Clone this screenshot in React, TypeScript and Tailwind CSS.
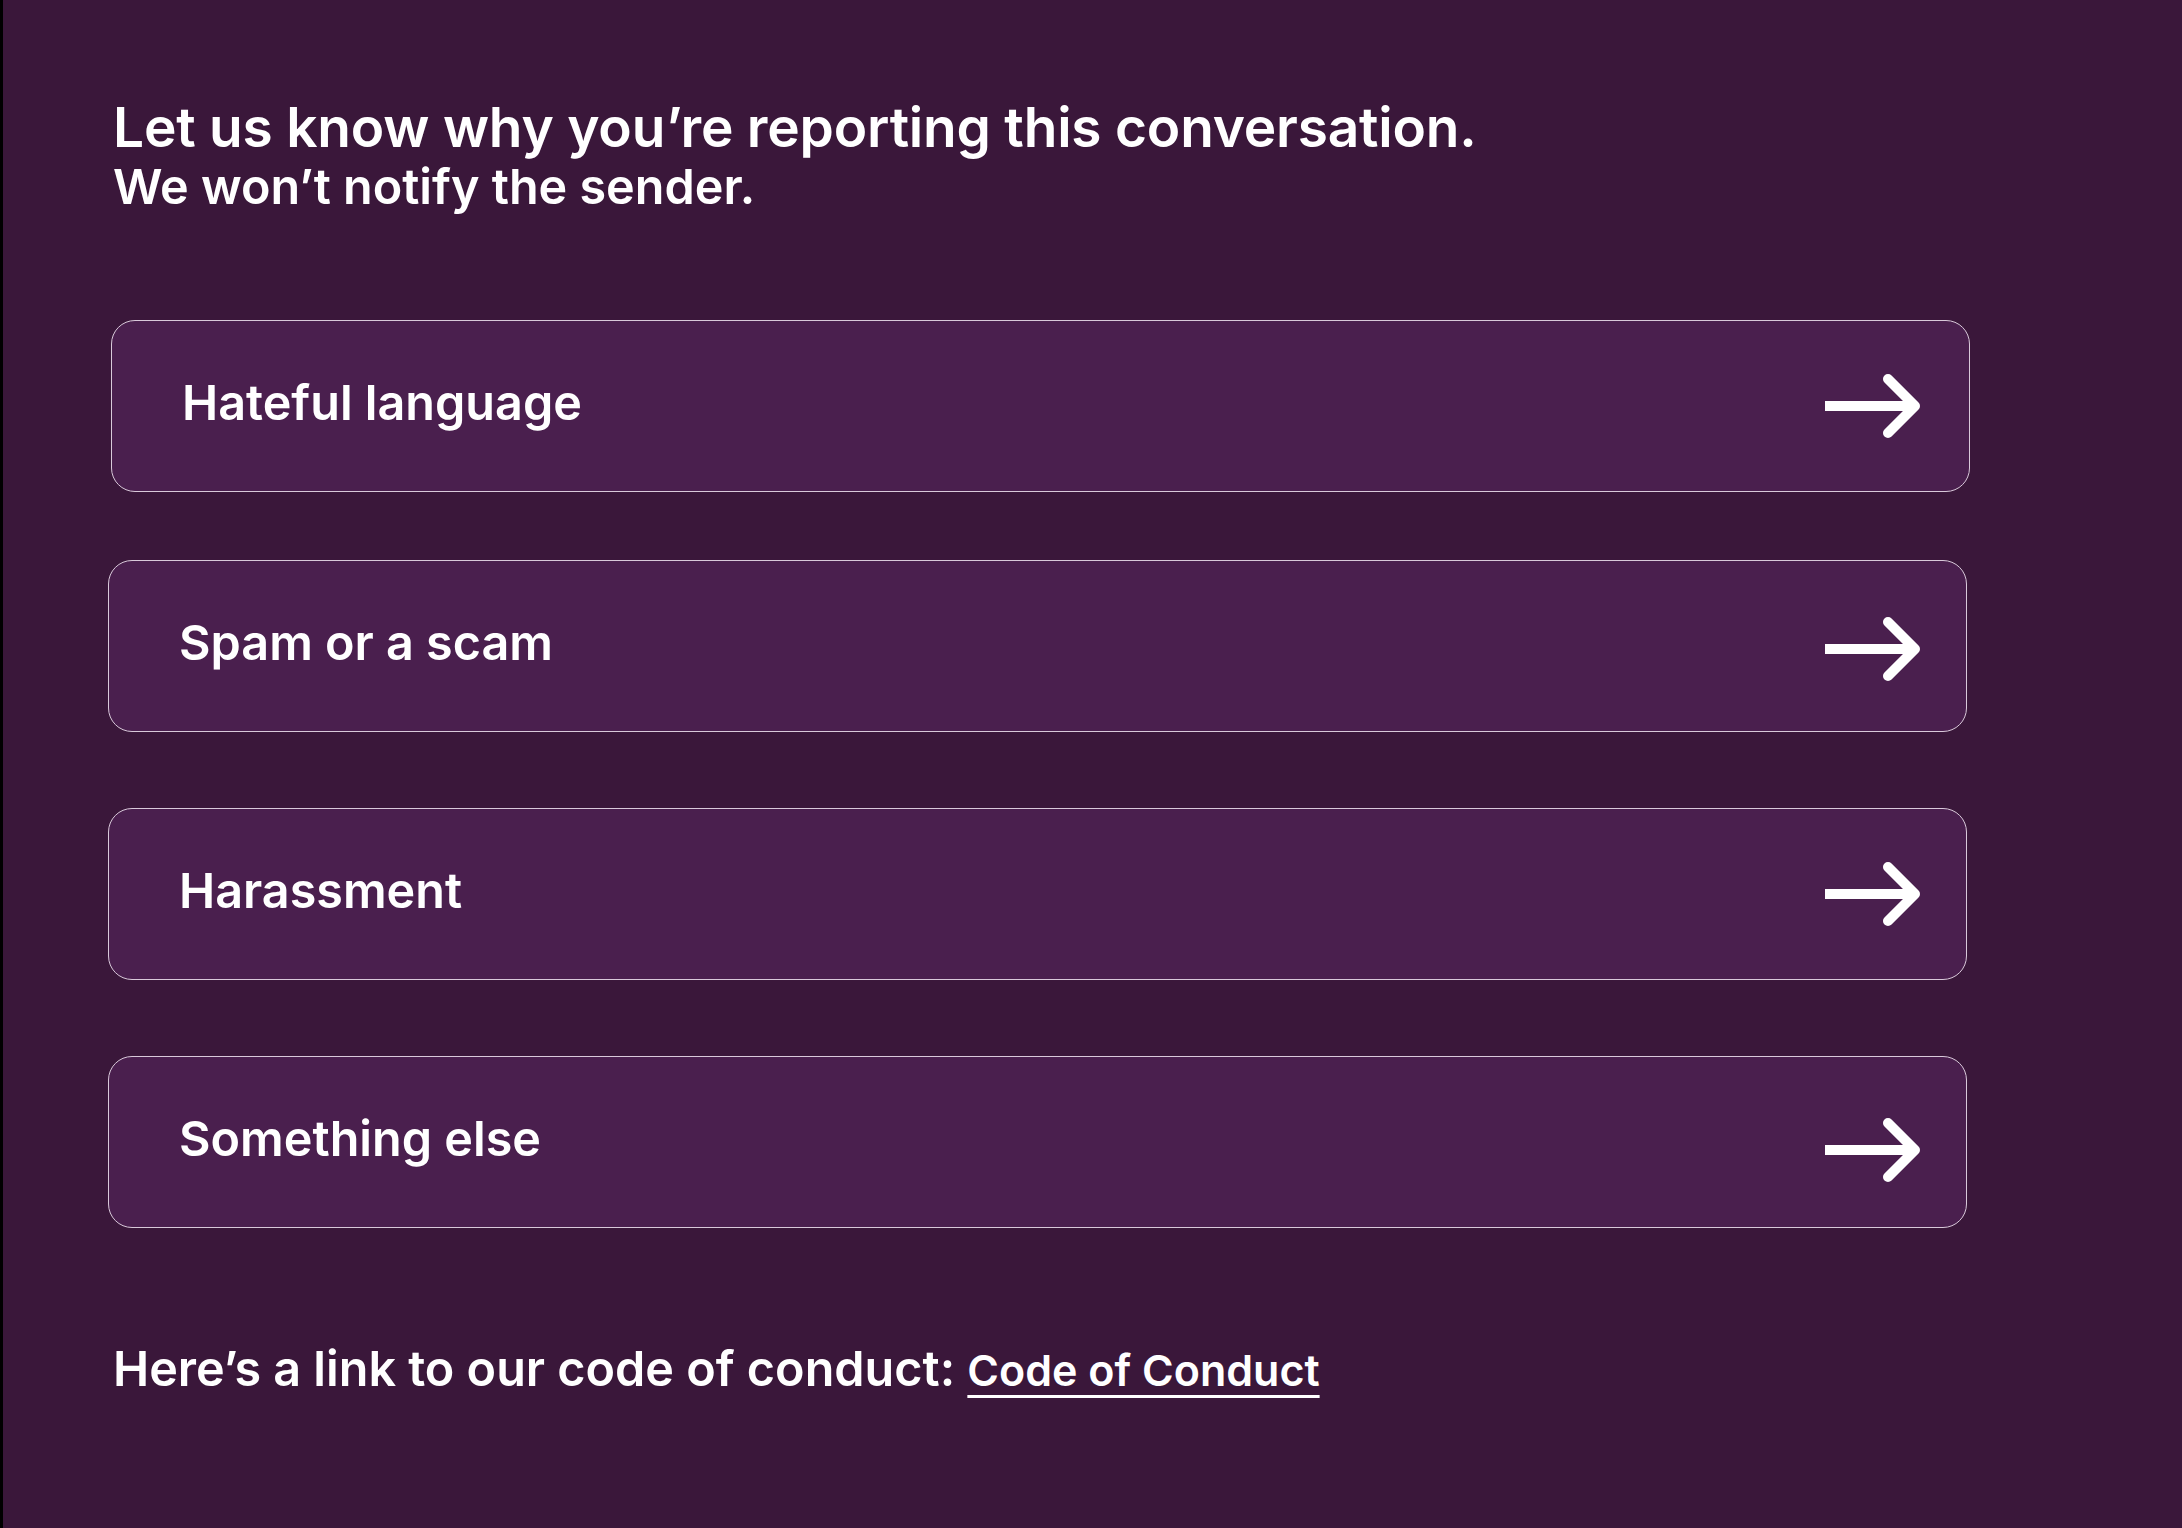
import React from "react";

const options = [
  { label: "Hateful language", cls: "mt-[108px] ml-[108px] w-[1859px] pr-[48px]", arrow: "" },
  { label: "Spam or a scam", cls: "mt-[68px] ml-[105px] w-[1859px] pr-[45px]", arrow: "translate-y-[3px]" },
  { label: "Harassment", cls: "mt-[76px] ml-[105px] w-[1859px] pr-[45px]", arrow: "" },
  { label: "Something else", cls: "mt-[76px] ml-[105px] w-[1859px] pr-[45px]", arrow: "translate-y-[8px]" },
];

function Arrow({ className }: { className?: string }) {
  return (
    <svg width="96" height="64" viewBox="0 0 96 64" fill="none" className={`shrink-0 ${className ?? ""}`}>
      <line x1="0" y1="32" x2="88" y2="32" stroke="white" strokeWidth="10" strokeLinecap="butt" />
      <polyline
        points="63,5 90,32 63,59"
        stroke="white"
        strokeWidth="10"
        strokeLinecap="round"
        strokeLinejoin="round"
        fill="none"
      />
    </svg>
  );
}

export default function App() {
  return (
    <div
      className="flex min-h-[1528px] w-full bg-[#3a173a] text-white"
      style={{ fontFamily: "Inter, 'Noto Sans', sans-serif" }}
    >
      <div className="w-[3px] shrink-0 bg-black" />
      <main className="flex flex-1 flex-col">
        <div className="ml-[110px] mt-[100px] flex flex-col">
          <h1 className="text-[55px] font-semibold leading-none tracking-[-0.2px]">
            Let us know why you’re reporting this conversation.
          </h1>
          <p className="mt-[8px] text-[48.5px] font-semibold leading-none">We won’t notify the sender.</p>
        </div>

        {options.map((o) => (
          <button
            key={o.label}
            type="button"
            className={`${o.cls} flex h-[172px] items-center justify-between rounded-[24px] border border-[#d9c9da] bg-[#4a1f4e] pl-[70px] text-left`}
          >
            <span className="-translate-y-[2px] text-[48.5px] font-semibold leading-none">{o.label}</span>
            <Arrow className={o.arrow} />
          </button>
        ))}

        <p className="ml-[110px] mt-[117px] text-[48.5px] font-semibold leading-none">
          Here’s a link to our code of conduct:{" "}
          <a
            href="#"
            className="text-[43px] underline decoration-[3px] underline-offset-[9px]"
          >
            Code of Conduct
          </a>
        </p>
      </main>
    </div>
  );
}
